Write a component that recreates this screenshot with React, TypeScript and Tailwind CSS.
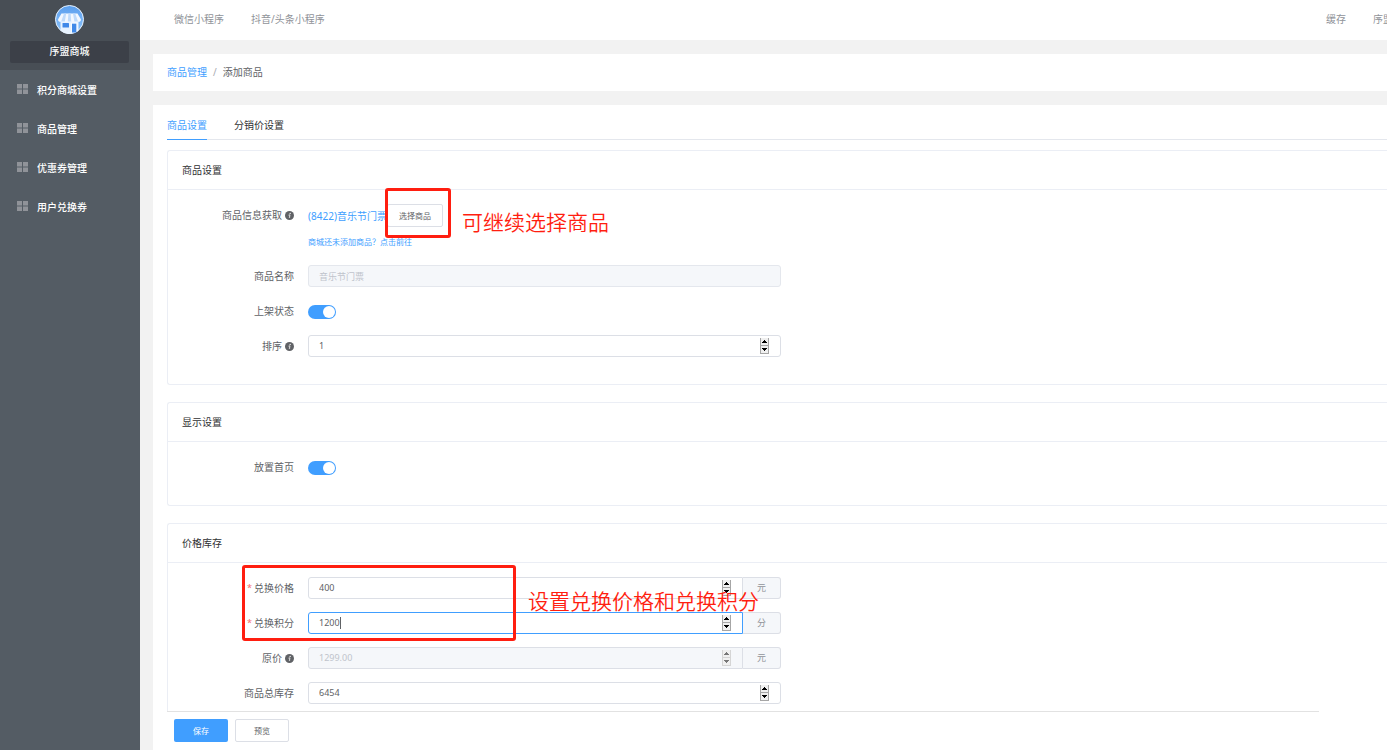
import { useState } from "react";
import type { ReactNode } from "react";

const menu = ["积分商城设置", "商品管理", "优惠券管理", "用户兑换券"];

function ShopLogo() {
  return (
    <svg viewBox="0 0 29 29" className="size-[29px]" aria-hidden="true">
      <defs>
        <linearGradient id="sky" x1="0" y1="0" x2="0" y2="1">
          <stop offset="0" stopColor="#5b9fee" />
          <stop offset="1" stopColor="#8cc3fb" />
        </linearGradient>
      </defs>
      <circle cx="14.5" cy="14.5" r="14" fill="url(#sky)" stroke="#e9f2fc" strokeWidth="1" />
      <path d="M5.5 14h18v11.8a14 14 0 0 1-18 0z" fill="#e8f3ff" />
      <path d="M6.500 8.500h16l3.500 6c0 1.400-1 2.300-2.300 2.300H5.300C4 16.800 3 15.900 3 14.500z" fill="#f2f8ff" />
      <path d="M9 8.500h2.200l-1.400 8H6.200zM13.400 8.500h2.300l.5 8h-3.400zM18 8.500h2.200l2.800 8h-3.600z" fill="#bfdbfb" />
      <rect x="7.500" y="18" width="6.500" height="4.500" rx=".5" fill="#4089e8" />
      <rect x="17" y="18.500" width="4.500" height="9" fill="#4089e8" />
      <path d="M16.500 27.500v-9.500h5.500v9" fill="none" stroke="#fff" strokeWidth=".7" />
    </svg>
  );
}

function GridIcon() {
  return (
    <svg viewBox="0 0 11 11" className="size-[11px]" fill="#909399" aria-hidden="true">
      <path d="M0 0h5v4.500H0zM6 0h5v4.500H6zM0 5.500h5V10H0zM6 5.500h5V10H6z" />
    </svg>
  );
}

function InfoIcon() {
  return (
    <svg viewBox="0 0 18 18" className="ml-[3px] size-[9px]" aria-hidden="true">
      <circle cx="9" cy="9" r="9" fill="#606266" />
      <circle cx="10.300" cy="4.800" r="1.300" fill="#fff" />
      <path d="M7 8.300l3-.6-1.300 5.300 1.600-.6" fill="none" stroke="#fff" strokeWidth="1.500" />
    </svg>
  );
}

function Card({ title, children }: { title: string; children: ReactNode }) {
  return (
    <section className="mb-[17px] rounded-l-[3px] border border-r-0 border-[#ebeef5]">
      <h2 className="border-b border-[#ebeef5] px-3.5 leading-[38px] text-[#303133]">{title}</h2>
      <div className="relative px-3.5 pt-3.5 pb-3.5">{children}</div>
    </section>
  );
}

type RowProps = {
  label: string;
  htmlFor: string;
  info?: boolean;
  required?: boolean;
  children: ReactNode;
};

function Row({ label, htmlFor, info, required, children }: RowProps) {
  return (
    <div className="mb-[13px] flex items-start">
      <label htmlFor={htmlFor} className="flex h-[22px] w-[126px] shrink-0 items-center justify-end pr-3.5">
        {required && <span className="mr-0.5 text-[9px] text-[#f56c6c]">*</span>}
        {label}
        {info && <InfoIcon />}
      </label>
      <div className="min-w-0 flex-1">{children}</div>
    </div>
  );
}

function Spinner({ disabled, onStep }: { disabled?: boolean; onStep: (n: number) => void }) {
  const btn =
    "flex h-2 w-[9px] items-center justify-center border border-t-0 border-[#a6a6a6] bg-[#f0f0f0] disabled:border-[#d5d5d5] disabled:text-[#777]";
  return (
    <div className="absolute top-[3px] right-3 flex flex-col text-black">
      <button type="button" aria-label="增加" disabled={disabled} onClick={() => onStep(1)} className={btn}>
        <svg viewBox="0 0 5 3" className="h-[3px] w-[5px]" fill="currentColor">
          <path d="M2 0h1v1h1v1h1v1H0V2h1V1h1z" />
        </svg>
      </button>
      <button type="button" aria-label="减少" disabled={disabled} onClick={() => onStep(-1)} className={btn}>
        <svg viewBox="0 0 5 3" className="h-[3px] w-[5px]" fill="currentColor">
          <path d="M0 0h5v1H4v1H3v1H2V2H1V1H0z" />
        </svg>
      </button>
    </div>
  );
}

type NumberFieldProps = {
  id: string;
  initial: string;
  unit?: string;
  disabled?: boolean;
  active?: boolean;
};

function NumberField({ id, initial, unit, disabled, active }: NumberFieldProps) {
  const [value, setValue] = useState(initial);
  return (
    <div className="flex h-[22px] w-full max-w-[473px]">
      <div className="relative flex-1">
        <input
          id={id}
          inputMode="decimal"
          value={value}
          disabled={disabled}
          onChange={(e) => setValue(e.target.value)}
          className={`block h-[22px] w-full border px-2.5 pb-px text-[9px] outline-none focus:border-[#409eff] disabled:bg-[#f5f7fa] disabled:text-[#c0c4cc] ${
            active ? "border-[#409eff]" : "border-[#dcdfe6]"
          } ${unit ? "rounded-l-[3px]" : "rounded-[3px]"}`}
        />
        {active && <span className="absolute top-[5px] left-8 h-3 w-px bg-[#606266]" />}
        <Spinner disabled={disabled} onStep={(n) => setValue(String(Number(value) + n))} />
      </div>
      {unit && (
        <span className="flex w-[38px] items-center justify-center rounded-r-[3px] border border-l-0 border-[#dcdfe6] bg-[#f5f7fa] text-[9px] text-[#909399]">
          {unit}
        </span>
      )}
    </div>
  );
}

function Toggle({ id }: { id: string }) {
  return (
    <span className="flex h-[22px] items-end pb-[3px]">
      <input
        id={id}
        type="checkbox"
        role="switch"
        defaultChecked
        className="relative h-3.5 w-7 appearance-none rounded-full bg-[#dcdfe6] before:absolute before:top-px before:left-px before:size-3 before:rounded-full before:bg-white checked:bg-[#409eff] checked:before:left-[15px]"
      />
    </span>
  );
}

export default function App() {
  return (
    <div className="flex h-screen overflow-hidden bg-[#f2f2f2] font-['Noto_Sans','Noto_Sans_CJK_SC',sans-serif] text-[10px] leading-[14px] text-[#606266]">
      {/* Sidebar */}
      <aside className="w-[140px] shrink-0 bg-[#545c64] text-white">
        <div className="flex h-[70px] flex-col items-center bg-[#484e55] pt-[5px] pr-px">
          <ShopLogo />
          <div className="mt-[7px] h-[22px] w-[119px] rounded-[2px] bg-[#3c4048] text-center leading-5 font-medium">
            序盟商城
          </div>
        </div>
        <nav>
          {menu.map((item) => (
            <a key={item} href="#" className="flex h-[39px] items-center gap-[9px] px-[17px] font-medium">
              <GridIcon />
              {item}
            </a>
          ))}
        </nav>
      </aside>

      <div className="flex min-w-0 flex-1 flex-col">
        {/* Top bar */}
        <header className="flex h-10 shrink-0 items-center justify-between overflow-hidden bg-white pb-0.5 pl-[34px] text-[#909399]">
          <nav className="flex gap-[27px]">
            <a href="#">微信小程序</a>
            <a href="#">抖音/头条小程序</a>
          </nav>
          <nav className="-mr-[26px] flex shrink-0 gap-[27px]">
            <a href="#">缓存</a>
            <a href="#">序盟商城</a>
          </nav>
        </header>

        <main className="flex min-h-0 flex-1 flex-col pt-3.5 pl-[13px]">
          <div className="mb-3.5 flex h-[37px] shrink-0 items-center gap-1.5 bg-white px-3.5 pb-px">
            <a href="#" className="text-[#409eff]">商品管理</a>
            <span className="text-[#a8abb2]">/</span>
            <span>添加商品</span>
          </div>

          <div className="flex min-h-0 flex-1 flex-col bg-white pl-3.5">
            {/* Tabs */}
            <div className="mb-2.5 flex h-[35px] shrink-0 gap-[27px] border-b border-[#e4e7ed] pt-[13px] text-[#303133]">
              <button type="button" className="-mb-px flex border-b border-[#409eff] text-[#409eff]">
                商品设置
              </button>
              <button type="button" className="flex">分销价设置</button>
            </div>

            <form className="min-h-0 flex-1 overflow-hidden">
              <Card title="商品设置">
                <Row label="商品信息获取" htmlFor="pick" info>
                  <div className="flex h-[23px] items-center">
                    <span className="pt-px text-[#409eff]">(8422)音乐节门票</span>
                    <button
                      id="pick"
                      type="button"
                      className="h-[23px] w-14 rounded-[2px] border border-[#dcdfe6] bg-white text-[8px]"
                    >
                      选择商品
                    </button>
                  </div>
                  <a href="#" className="mt-2 block h-[17px] text-[8px] text-[#409eff]">
                    商城还未添加商品？点击前往
                  </a>
                </Row>
                <Row label="商品名称" htmlFor="name">
                  <input
                    id="name"
                    disabled
                    value="音乐节门票"
                    className="block h-[22px] w-full max-w-[473px] rounded-[3px] border border-[#e4e7ed] bg-[#f5f7fa] px-2.5 text-[9px] text-[#c0c4cc]"
                  />
                </Row>
                <Row label="上架状态" htmlFor="on">
                  <Toggle id="on" />
                </Row>
                <Row label="排序" htmlFor="sort" info>
                  <NumberField id="sort" initial="1" />
                </Row>
                <div className="pointer-events-none absolute -top-0.5 left-[217px] h-[50px] w-[66px] rounded-[3px] border-3 border-[#ff1e10]" />
                <p className="pointer-events-none absolute top-[17px] left-[294px] text-[21px] leading-[30px] font-[350] text-[#ff1e10]">
                  可继续选择商品
                </p>
              </Card>

              <Card title="显示设置">
                <Row label="放置首页" htmlFor="home">
                  <Toggle id="home" />
                </Row>
              </Card>

              <Card title="价格库存">
                <Row label="兑换价格" htmlFor="price" required>
                  <NumberField id="price" initial="400" unit="元" />
                </Row>
                <Row label="兑换积分" htmlFor="points" required>
                  <NumberField id="points" initial="1200" unit="分" active />
                </Row>
                <Row label="原价" htmlFor="origin" info>
                  <NumberField id="origin" initial="1299.00" unit="元" disabled />
                </Row>
                <Row label="商品总库存" htmlFor="stock">
                  <NumberField id="stock" initial="6454" />
                </Row>
                <div className="pointer-events-none absolute top-0.5 left-[74px] h-[76px] w-[274px] rounded-[3px] border-3 border-[#ff1e10]" />
                <p className="pointer-events-none absolute top-[23px] left-[360px] text-[21px] leading-[30px] font-[350] text-[#ff1e10]">
                  设置兑换价格和兑换积分
                </p>
              </Card>
            </form>

            {/* Actions */}
            <footer className="mr-[68px] flex h-[39px] shrink-0 gap-[7px] border-t border-[#e2e2e2] pt-[7px] pl-[7px] text-[8px]">
              <button type="button" className="h-[23px] w-[54px] rounded-[2px] bg-[#409eff] text-white">
                保存
              </button>
              <button type="button" className="h-[23px] w-[54px] rounded-[2px] border border-[#dcdfe6] bg-white">
                预览
              </button>
            </footer>
          </div>
        </main>
      </div>
    </div>
  );
}
